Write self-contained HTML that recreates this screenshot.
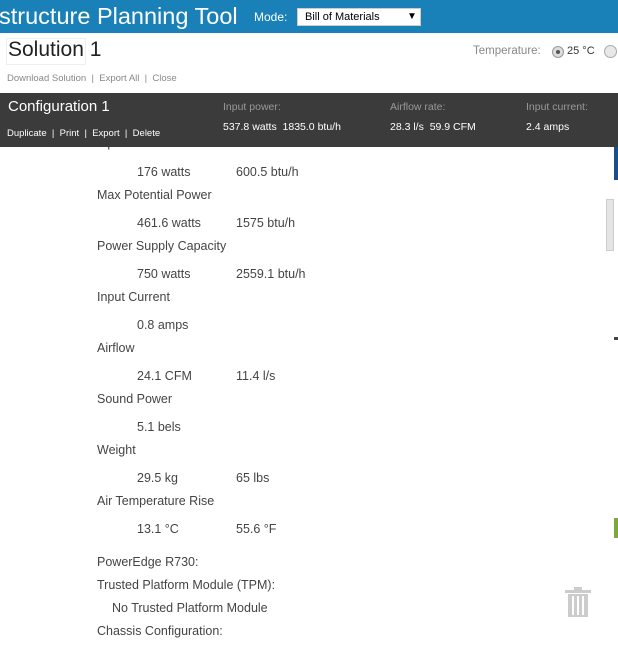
<!DOCTYPE html><html><head><style>
body{margin:0;width:618px;height:647px;overflow:hidden;background:#fff;font-family:"Liberation Sans",sans-serif;position:relative}
.a{position:absolute;white-space:nowrap}
.t{font-size:12.5px;color:#444}
</style></head><body>
<div class="a" style="left:0;top:0;width:618px;height:33px;background:#1a80b8"></div>
<div class="a" style="left:-1px;top:3px;font-size:23.5px;color:#fff">structure Planning Tool</div>
<div class="a" style="left:254px;top:10px;font-size:12px;color:#fff">Mode:</div>
<div class="a" style="left:297px;top:8px;width:124px;height:18px;background:#fff;border:1px solid #ccc;box-sizing:border-box"></div>
<div class="a" style="left:305px;top:11px;font-size:11px;color:#000">Bill of Materials</div>
<div class="a" style="left:407px;top:11px;font-size:10px;color:#000">▼</div>
<div class="a" style="left:6px;top:38px;width:78px;height:25px;border:1px solid #eee"></div>
<div class="a" style="left:8px;top:38px;font-size:21px;color:#222">Solution 1</div>
<div class="a" style="left:473px;top:45px;font-size:11.5px;color:#888">Temperature:</div>
<div class="a" style="left:552px;top:46px;width:10px;height:10px;border-radius:50%;border:1px solid #999;background:#ddd"></div>
<div class="a" style="left:556px;top:50px;width:4px;height:4px;border-radius:50%;background:#555"></div>
<div class="a" style="left:567px;top:45px;font-size:11px;color:#333">25 °C</div>
<div class="a" style="left:604px;top:45px;width:11px;height:11px;border-radius:50%;border:1px solid #aaa;background:#e8e8e8"></div>
<div class="a" style="left:7px;top:73px;font-size:9.5px;color:#888">Download Solution &nbsp;|&nbsp; Export All &nbsp;|&nbsp; Close</div>
<div class="a t" style="left:97px;top:136px">Input Power</div>
<div class="a" style="left:0;top:93px;width:618px;height:54px;background:#3b3b3b"></div>
<div class="a" style="left:8px;top:98px;font-size:15px;color:#fff">Configuration 1</div>
<div class="a" style="left:7px;top:128px;font-size:9.5px;color:#fff">Duplicate &nbsp;|&nbsp; Print &nbsp;|&nbsp; Export &nbsp;|&nbsp; Delete</div>
<div class="a" style="left:223px;top:101px;font-size:10.5px;color:#999">Input power:</div>
<div class="a" style="left:223px;top:121px;font-size:10.5px;color:#fff">537.8 watts &nbsp;1835.0 btu/h</div>
<div class="a" style="left:390px;top:101px;font-size:10.5px;color:#999">Airflow rate:</div>
<div class="a" style="left:390px;top:121px;font-size:10.5px;color:#fff">28.3 l/s &nbsp;59.9 CFM</div>
<div class="a" style="left:526px;top:101px;font-size:10.5px;color:#999">Input current:</div>
<div class="a" style="left:526px;top:121px;font-size:10.5px;color:#fff">2.4 amps</div>
<div class="a" style="left:614px;top:147px;width:4px;height:33px;background:#1b4f8a"></div>
<div class="a" style="left:606px;top:199px;width:6px;height:50px;background:#e4e4e4;border:1px solid #ccc"></div>
<div class="a" style="left:614px;top:337px;width:4px;height:3px;background:#444"></div>
<div class="a" style="left:614px;top:518px;width:4px;height:20px;background:#7aa83a"></div>
<svg class="a" style="left:564px;top:586px" width="28" height="32"><rect x="1" y="4" width="26" height="3" fill="#ccc"/><rect x="10" y="1" width="8" height="3" fill="#ccc"/><rect x="4" y="8" width="20" height="23" fill="#ccc"/><rect x="8" y="10" width="2" height="19" fill="#fff"/><rect x="13" y="10" width="2" height="19" fill="#fff"/><rect x="18" y="10" width="2" height="19" fill="#fff"/></svg>
<div class="t">
<div class="a" style="left:137px;top:165px">176 watts</div><div class="a" style="left:236px;top:165px">600.5 btu/h</div>
<div class="a" style="left:97px;top:188px">Max Potential Power</div>
<div class="a" style="left:137px;top:216px">461.6 watts</div><div class="a" style="left:236px;top:216px">1575 btu/h</div>
<div class="a" style="left:97px;top:239px">Power Supply Capacity</div>
<div class="a" style="left:137px;top:267px">750 watts</div><div class="a" style="left:236px;top:267px">2559.1 btu/h</div>
<div class="a" style="left:97px;top:290px">Input Current</div>
<div class="a" style="left:137px;top:318px">0.8 amps</div>
<div class="a" style="left:97px;top:341px">Airflow</div>
<div class="a" style="left:137px;top:369px">24.1 CFM</div><div class="a" style="left:236px;top:369px">11.4 l/s</div>
<div class="a" style="left:97px;top:392px">Sound Power</div>
<div class="a" style="left:137px;top:420px">5.1 bels</div>
<div class="a" style="left:97px;top:443px">Weight</div>
<div class="a" style="left:137px;top:471px">29.5 kg</div><div class="a" style="left:236px;top:471px">65 lbs</div>
<div class="a" style="left:97px;top:494px">Air Temperature Rise</div>
<div class="a" style="left:137px;top:522px">13.1 °C</div><div class="a" style="left:236px;top:522px">55.6 °F</div>
<div class="a" style="left:97px;top:555px">PowerEdge R730:</div>
<div class="a" style="left:97px;top:578px">Trusted Platform Module (TPM):</div>
<div class="a" style="left:112px;top:601px">No Trusted Platform Module</div>
<div class="a" style="left:97px;top:624px">Chassis Configuration:</div>
</div>
</body></html>
